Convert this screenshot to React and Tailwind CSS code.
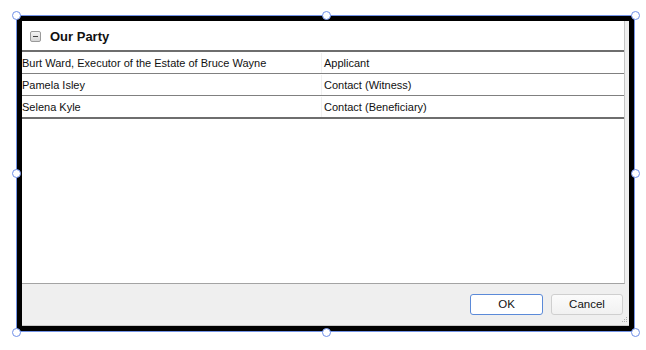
const rows = [
  { name: 'Burt Ward, Executor of the Estate of Bruce Wayne', role: 'Applicant' },
  { name: 'Pamela Isley', role: 'Contact (Witness)' },
  { name: 'Selena Kyle', role: 'Contact (Beneficiary)' },
];

const handles = [
  'left-[12px] top-[11px]',
  'left-[322px] top-[11px]',
  'left-[631px] top-[11px]',
  'left-[12px] top-[169px]',
  'left-[631px] top-[169px]',
  'left-[12px] top-[328px]',
  'left-[322px] top-[328px]',
  'left-[631px] top-[328px]',
];

export default function App() {
  return (
    <div className="relative w-[646px] h-[350px] bg-white overflow-hidden font-['Liberation_Sans',Arial,sans-serif]">

      {/* Selected dialog frame */}
      <div className="ml-[16px] mt-[15px] w-[619px] h-[317px] border border-[#7393e6]">
        <div className="h-full border-[5px] border-black bg-[#efefef] flex flex-col">

          {/* Panel */}
          <div className="flex-1 mr-[4px] bg-white border-r border-b border-r-[#c4c4c4] border-b-[#a3a3a3] flex flex-col">
            <div className="h-[29px] flex items-center pl-[8px] pt-[1px]">
              <div className="w-[11px] h-[11px] rounded-[2px] border border-[#9a9a9a] bg-gradient-to-b from-[#f4f4f4] to-[#d6d6d6] flex items-center justify-center">
                <div className="w-[5px] h-[1px] bg-[#404040]" />
              </div>
              <div className="ml-[9px] text-[13px] font-bold text-[#111] leading-none">Our Party</div>
            </div>
            <div className="h-[2px] bg-[#6e6e6e]" />
            {rows.map((r, i) => (
              <div key={r.name}>
                <div className="h-[21px] flex text-[11px] text-[#111] leading-none pt-[1px]">
                  <div className="w-[300px] flex items-center border-r border-[#f0f0f0]">{r.name}</div>
                  <div className="flex items-center pl-[2px]">{r.role}</div>
                </div>
                <div className={i === rows.length - 1 ? 'h-[2px] bg-[#6e6e6e]' : 'h-[1px] bg-[#808080]'} />
              </div>
            ))}
          </div>

          {/* Footer */}
          <div className="relative h-[42px] flex items-center justify-end gap-[8px] pr-[6px] border-b border-[#c8c8c8]">
            <button className="w-[73px] h-[21px] rounded-[3px] border border-[#5b8ad8] bg-white text-[11.5px] text-[#111] leading-none">
              OK
            </button>
            <button className="w-[72px] h-[21px] rounded-[3px] border border-[#cfcfcf] bg-gradient-to-b from-[#fbfbfb] to-[#f1f1f1] text-[11.5px] text-[#111] leading-none">
              Cancel
            </button>
            <svg className="absolute right-[1px] bottom-[2px]" width="6" height="6" viewBox="0 0 6 6">
              <rect x="4" y="0" width="1" height="1" fill="#b0b0b0" />
              <rect x="2" y="2" width="1" height="1" fill="#b0b0b0" />
              <rect x="4" y="2" width="1" height="1" fill="#b0b0b0" />
              <rect x="0" y="4" width="1" height="1" fill="#b0b0b0" />
              <rect x="2" y="4" width="1" height="1" fill="#b0b0b0" />
              <rect x="4" y="4" width="1" height="1" fill="#b0b0b0" />
            </svg>
          </div>
        </div>
      </div>

      {/* Selection handles */}
      {handles.map(h => (
        <div key={h} className={`absolute ${h} w-[9px] h-[9px] rounded-full border-[1.5px] border-[#6f8fe8] bg-white`} />
      ))}
    </div>
  );
}
